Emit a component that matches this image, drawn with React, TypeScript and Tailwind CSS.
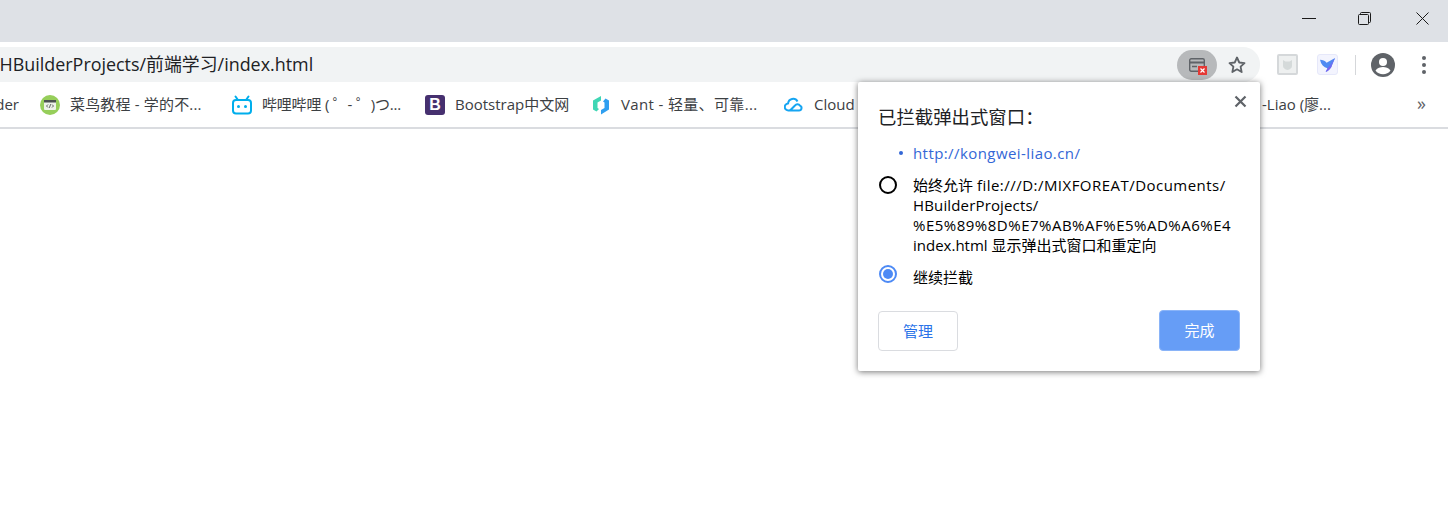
const FONT = "font-['Open_Sans','Noto_Sans_CJK_SC',sans-serif]"

const RunoobIcon = () => (
    <svg width="20" height="20" viewBox="0 0 20 20">
        <circle cx="10" cy="10" r="10" fill="#96ce5a" />
        <rect x="4" y="5" width="12" height="10" rx="1" fill="#eef2ea" />
        <rect x="4" y="5" width="12" height="2.500" fill="#4b5150" />
        <path d="M8 9.500 6.500 11 8 12.500M12 9.500l1.500 1.500L12 12.500M10.600 9.200l-1.200 3.600" stroke="#4b5150" strokeWidth="0.900" fill="none" />
    </svg>
)

const BiliIcon = () => (
    <svg width="20" height="20" viewBox="0 0 20 20" fill="none">
        <rect x="1" y="5" width="18" height="13.500" rx="3" stroke="#00aeec" strokeWidth="2" />
        <path d="M6 5 3.500 1.500M14 5l2.500-3.500" stroke="#00aeec" strokeWidth="2" strokeLinecap="round" />
        <circle cx="6.500" cy="11.500" r="1.500" fill="#00aeec" />
        <circle cx="13.500" cy="11.500" r="1.500" fill="#00aeec" />
    </svg>
)

const BootstrapIcon = () => (
    <div className="flex h-5 w-5 items-center justify-center rounded-[3px] bg-[#46306f] text-[16px] leading-none font-bold text-white font-['Liberation_Sans',sans-serif]">
        B
    </div>
)

const VantIcon = () => (
    <svg width="20" height="20" viewBox="0 0 20 20">
        <path d="M2 5.500 10 1v4.500L6.500 7.500v5.500L8 14l-2.500 2.500L2 14.500z" fill="#3fd6b4" />
        <path d="M18 5.500v9L10 19.500V15l3.500-2V7.500L12 6.500l2.500-3z" fill="#2f9ff0" />
    </svg>
)

const CloudIcon = () => (
    <svg width="20" height="20" viewBox="0 0 20 20" fill="none" stroke="#16a5f2" strokeWidth="2" strokeLinejoin="round">
        <path d="M6 15.500H4.500a3.500 3.500 0 0 1-.4-7A5 5 0 0 1 13.500 6.500" />
        <path d="M6 15.500 11 10.500a3 3 0 0 1 5 .2 2.500 2.500 0 0 1-1 4.800H6" />
    </svg>
)

const bookmarks = [
    { title: "菜鸟教程 - 学的不...", width: "w-[192px] tracking-[0.17px]", icon: <RunoobIcon /> },
    { title: "哔哩哔哩 ( ゜- ゜)つ...", width: "w-[193px] tracking-[-0.2px]", icon: <BiliIcon /> },
    { title: "Bootstrap中文网", width: "w-[166px]", icon: <BootstrapIcon /> },
    { title: "Vant - 轻量、可靠...", width: "w-[193px] tracking-[0.35px]", icon: <VantIcon /> },
    { title: "Cloud", width: "w-[478px]", icon: <CloudIcon /> },
]

const TitleBar = () => (
    <div className="flex h-[42px] items-start justify-end bg-[#dee1e6]">
        <div className="flex h-[36px] w-[48px] items-center justify-center">
            <div className="h-px w-[14px] bg-[#1a1a1a]" />
        </div>
        <div className="flex h-[36px] w-[63px] items-center justify-center">
            <svg width="13" height="13" viewBox="0 0 13 13" fill="none" stroke="#1a1a1a">
                <rect x="0.500" y="2.500" width="10" height="10" rx="1" />
                <path d="M2.500 2.500V1.500a1 1 0 0 1 1-1h8a1 1 0 0 1 1 1v8a1 1 0 0 1-1 1h-1" />
            </svg>
        </div>
        <div className="flex h-[36px] w-[52px] items-center justify-center">
            <svg width="13" height="13" viewBox="0 0 13 13" fill="none" stroke="#1a1a1a">
                <path d="M0.500 0.500l12 12M12.500 0.500l-12 12" />
            </svg>
        </div>
    </div>
)

const BlockedIcon = () => (
    <div className="relative h-[14px] w-[16px]">
        <svg className="block" width="16" height="14" viewBox="0 0 16 14" fill="none">
            <rect x="0.700" y="0.700" width="14.600" height="12.600" rx="1.500" stroke="#5f6368" strokeWidth="1.400" />
            <path d="M1 4.500h14" stroke="#5f6368" strokeWidth="2" />
            <path d="M3 8.500h5" stroke="#5f6368" strokeWidth="1.400" />
        </svg>
        <div className="absolute top-[8px] left-[9px] flex h-[9px] w-[9px] items-center justify-center bg-[#e53935]">
            <svg width="5" height="5" viewBox="0 0 5 5" stroke="#ffffff" strokeWidth="1.200">
                <path d="M0.500 0.500l4 4M4.500 0.500l-4 4" />
            </svg>
        </div>
    </div>
)

const ToolBar = () => (
    <div className="flex h-[40px] bg-white pt-[5px]">
        <div className="flex h-[35px] w-[1260px] items-center justify-between overflow-hidden rounded-r-[17px] bg-[#f1f3f4]">
            <div className="ml-[-7px] text-[17.900px] whitespace-nowrap text-[#202124]">/HBuilderProjects/前端学习/index.html</div>
            <div className="flex items-center">
                <div className="flex h-[30px] w-[40px] items-center justify-center rounded-[15px] bg-[#b7b9bb]">
                    <BlockedIcon />
                </div>
                <div className="mr-[3px] flex w-[40px] items-center justify-center">
                    <svg width="20" height="20" viewBox="0 0 24 24" fill="none" stroke="#5f6368" strokeWidth="2.200" strokeLinejoin="round">
                        <path d="M12 3l2.700 6 6.300.7-4.700 4.300 1.300 6.500L12 17.200l-5.600 3.300 1.300-6.500L3 9.700 9.300 9z" />
                    </svg>
                </div>
            </div>
        </div>
        <div className="ml-[17px] flex h-[35px] items-center">
            <div className="flex h-[21px] w-[21px] items-center justify-center rounded-[2px] border-2 border-[#d5d8da] bg-[#eef0f0]">
                <svg width="11" height="12" viewBox="0 0 11 12">
                    <path d="M1 1l2.500 1.500h4L10 1v6c0 2-2 3.500-4.500 4C3 10.500 1 9 1 7z" fill="#d5dada" />
                </svg>
            </div>
            <div className="ml-[19px] flex h-[21px] w-[21px] items-center justify-center rounded-[3px] border border-[#e6e8fa] bg-[#f3f4fe]">
                <svg width="18" height="16" viewBox="0 0 19 17">
                    <path d="M1 3c3 0 5 1 7 3l9-5-3 7c-1 4-4 7-7 8l2-4C5 11 2 8 1 3z" fill="#4f8af2" />
                    <path d="M7 16l2-4 5-4c-1 4-4 7-7 8z" fill="#7a62f0" />
                    <path d="M9 12l8-11-3 7c-1 1.500-3 3-5 4z" fill="#6a70f2" />
                </svg>
            </div>
            <div className="ml-[17px] h-[20px] w-px bg-[#d5d7da]" />
            <div className="ml-[15px]">
                <svg className="block" width="24" height="24" viewBox="0 0 24 24">
                    <circle cx="12" cy="12" r="12" fill="#5f6368" />
                    <circle cx="12" cy="9" r="4" fill="#ffffff" />
                    <path d="M4.500 17.500c2-2.800 4.800-3.600 7.500-3.600s5.500.8 7.500 3.600C17.800 20 15 21.300 12 21.300S6.200 20 4.500 17.500z" fill="#ffffff" />
                </svg>
            </div>
            <div className="ml-[27px] flex flex-col gap-[3px]">
                <div className="h-[4px] w-[4px] rounded-full bg-[#5f6368]" />
                <div className="h-[4px] w-[4px] rounded-full bg-[#5f6368]" />
                <div className="h-[4px] w-[4px] rounded-full bg-[#5f6368]" />
            </div>
        </div>
    </div>
)

const BookmarkBar = () => (
    <div className="flex h-[47px] items-center overflow-hidden border-b-2 border-[#dadce0] text-[15px] whitespace-nowrap text-[#3c4043]">
        <div className="flex w-[40px] justify-end overflow-hidden pr-[21px]">
            <span>der</span>
        </div>
        {
            bookmarks.map(({ title, width, icon }) => (
                <div key={title} className={`flex items-center gap-[10px] ${width}`}>
                    <div className="h-5 w-5 shrink-0">{icon}</div>
                    <span>{title}</span>
                </div>
            ))
        }
        <div className="w-[144px] shrink-0">
            <span>-Liao (廖...</span>
        </div>
        <div className="mt-[-2px] ml-[11px] text-[18px] text-[#5f6368]">»</div>
    </div>
)

const Radio = ({ checked }: { checked?: boolean }) => (
    <div className={`flex h-[18px] w-[18px] shrink-0 items-center justify-center rounded-full border-2 ${checked ? "border-[#4d8af5]" : "border-black"}`}>
        {checked && <div className="h-[10px] w-[10px] rounded-full bg-[#4d8af5]" />}
    </div>
)

const Popup = () => (
    <div className="absolute top-[82px] left-[858px] h-[289px] w-[402px] rounded-[2px] bg-white pt-[23px] pr-[20px] pl-[20px] shadow-[0_1px_6px_rgba(0,0,0,0.55)]">
        <button className="absolute top-[13px] right-[13px]">
            <svg className="block" width="13" height="13" viewBox="0 0 13 13" stroke="#5f6368" strokeWidth="2.200">
                <path d="M1.500 1.500l10 10M11.500 1.500l-10 10" />
            </svg>
        </button>
        <div className="text-[18.400px] leading-[24px] text-[#202124]">已拦截弹出式窗口：</div>
        <div className="mt-[14px] flex items-center pl-[21px] text-[15px] leading-[20px] tracking-[0.42px] text-[#3367d6]">
            <span className="mr-[10px] h-[4px] w-[4px] rounded-full bg-[#3367d6]" />
            http://kongwei-liao.cn/
        </div>
        <div className="mt-[12px] flex gap-[17px] text-[15px] leading-[20px] text-black">
            <div className="mr-[-1px] ml-[1px] pt-[1px]"><Radio /></div>
            <div className="w-[320px] overflow-hidden whitespace-nowrap">
                <div>始终允许 <span className="tracking-[0.47px]">file:///D:/MIXFOREAT/Documents/</span></div>
                <div className="tracking-[0.15px]">HBuilderProjects/</div>
                <div className="tracking-[0.5px]">%E5%89%8D%E7%AB%AF%E5%AD%A6%E4</div>
                <div>index.html 显示弹出式窗口和重定向</div>
            </div>
        </div>
        <div className="mt-[10px] flex gap-[17px] text-[15px] leading-[20px] text-black">
            <div className="mr-[-1px] ml-[1px]"><Radio checked /></div>
            <div className="pt-[2px]">继续拦截</div>
        </div>
        <div className="mt-[23px] flex items-end justify-between text-[15px]">
            <button className="h-[40px] w-[80px] rounded-[4px] border border-[#dadce0] bg-white text-[#2a73e8]">管理</button>
            <button className="h-[41px] w-[81px] rounded-[4px] border border-[#8ab4f8] bg-[#669df6] text-white">完成</button>
        </div>
    </div>
)

const App = () => {
    return (
        <div className={`relative h-[517px] w-[1448px] overflow-hidden bg-white ${FONT}`}>
            <TitleBar />
            <ToolBar />
            <BookmarkBar />
            <Popup />
        </div>
    )
}

export default App
